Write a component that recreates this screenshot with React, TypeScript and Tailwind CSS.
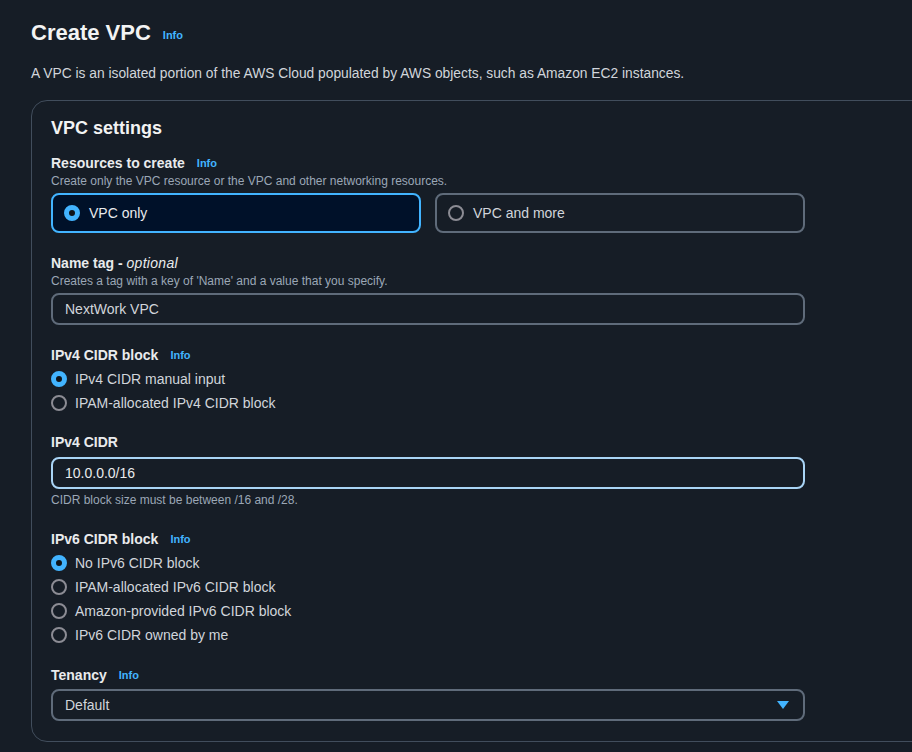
import React from 'react';

function Info() {
  return <span className="ml-3 text-[11px] font-bold text-[#42b4ff]">Info</span>;
}

function Radio({ checked }: { checked?: boolean }) {
  return checked ? (
    <span className="inline-block h-4 w-4 shrink-0 rounded-full border-[5px] border-[#42b4ff] bg-[#0f141a]" />
  ) : (
    <span className="inline-block h-4 w-4 shrink-0 rounded-full border-2 border-[#8c8c94]" />
  );
}

function RadioRow({ label, checked }: { label: string; checked?: boolean }) {
  return (
    <div className="flex h-6 items-center gap-2 text-[14px] text-[#d1d5db]">
      <Radio checked={checked} />
      <span>{label}</span>
    </div>
  );
}

function Label({ children, info }: { children: React.ReactNode; info?: boolean }) {
  return (
    <div className="flex items-center text-[14px] font-bold leading-5 text-[#e9ebed]">
      {children}
      {info && <Info />}
    </div>
  );
}

function Hint({ children }: { children: React.ReactNode }) {
  return <div className="text-[12px] leading-4 text-[#9ba7b6]">{children}</div>;
}

export default function App() {
  return (
    <div
      className="h-[752px] w-[912px] overflow-hidden bg-[#161d26] pl-[31px] pt-[17px]"
      style={{ fontFamily: '"Liberation Sans", Arial, sans-serif' }}
    >
      <div className="flex items-center text-[22px] font-bold leading-7 text-[#f2f3f3]">
        Create VPC
        <span className="ml-3 mt-1 text-[11px] font-bold text-[#42b4ff]">Info</span>
      </div>
      <p className="mt-[15px] text-[13.8px] leading-5 text-[#d1d5db]">
        A VPC is an isolated portion of the AWS Cloud populated by AWS objects, such as Amazon EC2 instances.
      </p>

      <div className="mt-4 w-[920px] rounded-2xl border border-[#414d5c] pb-5 pl-[19px] pt-[15px]">
        <div className="w-[754px]">
          <h2 className="text-[18px] font-bold leading-6 text-[#f2f3f3]">VPC settings</h2>

          {/* Resources to create */}
          <div className="mt-[13px]">
            <Label info>Resources to create</Label>
            <Hint>Create only the VPC resource or the VPC and other networking resources.</Hint>
            <div className="mt-1 grid grid-cols-2 gap-[14px]">
              <div className="flex h-10 items-center gap-[9px] rounded-lg border-2 border-[#42b4ff] bg-[#001129] pl-[11px] text-[14px] text-[#e9ebed]">
                <Radio checked />
                VPC only
              </div>
              <div className="flex h-10 items-center gap-[9px] rounded-lg border-2 border-[#5f6b7a] pl-[11px] text-[14px] text-[#d1d5db]">
                <Radio />
                VPC and more
              </div>
            </div>
          </div>

          {/* Name tag */}
          <div className="mt-5">
            <Label>
              Name tag -&nbsp;<span className="font-normal italic tracking-[0.3px]">optional</span>
            </Label>
            <Hint>Creates a tag with a key of 'Name' and a value that you specify.</Hint>
            <div className="mt-1 flex h-8 items-center rounded-lg border-2 border-[#5f6b7a] px-3 text-[14px] text-[#d1d5db]">
              NextWork VPC
            </div>
          </div>

          {/* IPv4 CIDR block */}
          <div className="mt-5">
            <Label info>IPv4 CIDR block</Label>
            <div className="mt-[2px]">
              <RadioRow label="IPv4 CIDR manual input" checked />
              <RadioRow label="IPAM-allocated IPv4 CIDR block" />
            </div>
          </div>

          {/* IPv4 CIDR */}
          <div className="mt-[17px]">
            <Label>IPv4 CIDR</Label>
            <div className="mt-[5px] flex h-8 items-center rounded-lg border-2 border-[#a9d4f5] px-3 text-[14px] text-[#e9ebed]">
              10.0.0.0/16
            </div>
            <div className="mt-[3px]">
              <Hint>CIDR block size must be between /16 and /28.</Hint>
            </div>
          </div>

          {/* IPv6 CIDR block */}
          <div className="mt-[21px]">
            <Label info>IPv6 CIDR block</Label>
            <div className="mt-[2px]">
              <RadioRow label="No IPv6 CIDR block" checked />
              <RadioRow label="IPAM-allocated IPv6 CIDR block" />
              <RadioRow label="Amazon-provided IPv6 CIDR block" />
              <RadioRow label="IPv6 CIDR owned by me" />
            </div>
          </div>

          {/* Tenancy */}
          <div className="mt-[18px]">
            <Label info>Tenancy</Label>
            <div className="mt-1 flex h-8 items-center justify-between rounded-lg border-2 border-[#5f6b7a] pl-3 pr-[14px] text-[14px] text-[#d1d5db]">
              <span>Default</span>
              <svg width="12" height="8" viewBox="0 0 12 8">
                <path d="M0 0 H12 L6 8 Z" fill="#42b4ff" />
              </svg>
            </div>
          </div>
        </div>
      </div>
    </div>
  );
}
